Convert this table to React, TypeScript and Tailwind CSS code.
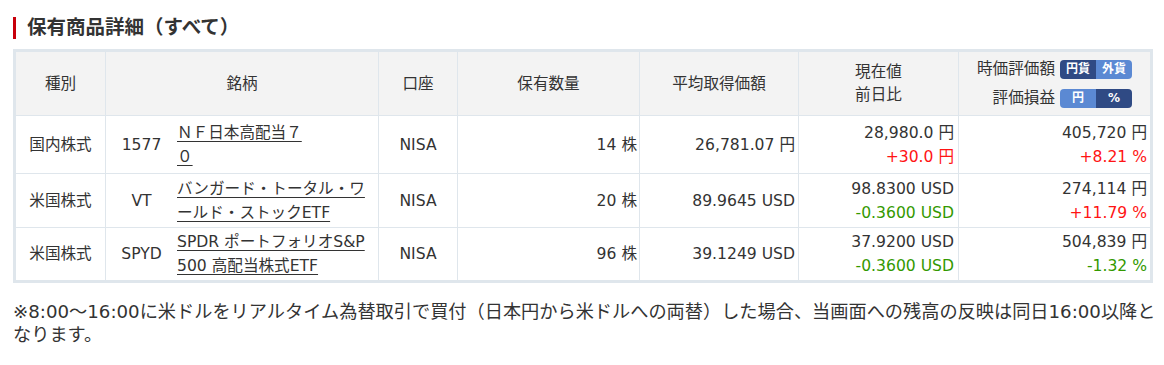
import React from "react";

const Toggle = ({ left, right, leftActive }: { left: string; right: string; leftActive: boolean }) => (
  <div className="flex h-[19px] w-[72px] overflow-hidden rounded-[4px] text-[12px] font-bold leading-[19px] text-white">
    <div className={leftActive ? "w-[36px] bg-[#2f4a84] text-center" : "w-[36px] bg-[#5b89d3] text-center"}>{left}</div>
    <div className={leftActive ? "w-[36px] bg-[#5b89d3] text-center" : "w-[36px] bg-[#2f4a84] text-center"}>{right}</div>
  </div>
);

type Row = {
  kind: string;
  code: string;
  name: React.ReactNode;
  qty: string;
  avg: string;
  price: string;
  diff: string;
  diffColor: string;
  value: string;
  pl: string;
  plColor: string;
};

const rows: Row[] = [
  {
    kind: "国内株式",
    code: "1577",
    name: (
      <>
        ＮＦ日本高配当７
        <br />０
      </>
    ),
    qty: "14 株",
    avg: "26,781.07 円",
    price: "28,980.0 円",
    diff: "+30.0 円",
    diffColor: "text-[#ff1414]",
    value: "405,720 円",
    pl: "+8.21 %",
    plColor: "text-[#ff1414]",
  },
  {
    kind: "米国株式",
    code: "VT",
    name: (
      <>
        バンガード・トータル・ワ
        <br />
        ールド・ストックETF
      </>
    ),
    qty: "20 株",
    avg: "89.9645 USD",
    price: "98.8300 USD",
    diff: "-0.3600 USD",
    diffColor: "text-[#339900]",
    value: "274,114 円",
    pl: "+11.79 %",
    plColor: "text-[#ff1414]",
  },
  {
    kind: "米国株式",
    code: "SPYD",
    name: (
      <>
        SPDR ポートフォリオS&amp;P
        <br />
        500 高配当株式ETF
      </>
    ),
    qty: "96 株",
    avg: "39.1249 USD",
    price: "37.9200 USD",
    diff: "-0.3600 USD",
    diffColor: "text-[#339900]",
    value: "504,839 円",
    pl: "-1.32 %",
    plColor: "text-[#339900]",
  },
];

export default function App() {
  return (
    <div className="h-[365px] w-[1164px] bg-white pl-[13px] font-['DejaVu_Sans','Noto_Sans_CJK_JP',sans-serif] text-[#333]">
      <div className="pt-[17px]">
        <div className="h-[22px] border-l-[3px] border-[#c8000b] pl-[11px] text-[19.5px] font-bold leading-[22px] text-[#333]">
          保有商品詳細（すべて）
        </div>
      </div>

      <div className="mt-[10px] grid w-[1140px] grid-cols-[89px_272px_78px_181px_158px_159px_191px] grid-rows-[63px_57px_53px_52px] gap-px border-[3px] border-[#dfe6ec] bg-[#dfe6ec] text-[15.6px] leading-[24px]">
        <div className="flex items-center justify-center bg-[#f3f3f3]">種別</div>
        <div className="flex items-center justify-center bg-[#f3f3f3]">銘柄</div>
        <div className="flex items-center justify-center bg-[#f3f3f3]">口座</div>
        <div className="flex items-center justify-center bg-[#f3f3f3]">保有数量</div>
        <div className="flex items-center justify-center bg-[#f3f3f3]">平均取得価額</div>
        <div className="flex flex-col items-center justify-center bg-[#f3f3f3] leading-[23px]">
          <div>現在値</div>
          <div>前日比</div>
        </div>
        <div className="flex items-center justify-center bg-[#f3f3f3]">
          <div className="flex flex-col items-end gap-[10px]">
            <div className="flex items-center gap-[5px]">
              <span className="leading-[19px]">時価評価額</span>
              <Toggle left="円貨" right="外貨" leftActive={true} />
            </div>
            <div className="flex items-center gap-[5px]">
              <span className="leading-[19px]">評価損益</span>
              <Toggle left="円" right="%" leftActive={false} />
            </div>
          </div>
        </div>

        {rows.map((r) => (
          <React.Fragment key={r.code}>
            <div className="flex items-center justify-center bg-white">{r.kind}</div>
            <div className="flex items-center bg-white">
              <div className="w-[71px] text-center">{r.code}</div>
              <div className="whitespace-nowrap text-[#333] underline underline-offset-[3px]">{r.name}</div>
            </div>
            <div className="flex items-center justify-center bg-white">NISA</div>
            <div className="flex items-center justify-end bg-white pr-[2px]">{r.qty}</div>
            <div className="flex items-center justify-end bg-white pr-[3px]">{r.avg}</div>
            <div className="flex flex-col items-end justify-center bg-white pr-[4px]">
              <div>{r.price}</div>
              <div className={r.diffColor}>{r.diff}</div>
            </div>
            <div className="flex flex-col items-end justify-center bg-white pr-[3px]">
              <div>{r.value}</div>
              <div className={r.plColor}>{r.pl}</div>
            </div>
          </React.Fragment>
        ))}
      </div>

      <div className="mt-[17px] text-[18.2px] leading-[23px] text-[#333]">
        <div className="whitespace-nowrap">
          ※8:00～16:00に米ドルをリアルタイム為替取引で買付（日本円から米ドルへの両替）した場合、当画面への残高の反映は同日16:00以降と
        </div>
        <div className="whitespace-nowrap">なります。</div>
      </div>
    </div>
  );
}
